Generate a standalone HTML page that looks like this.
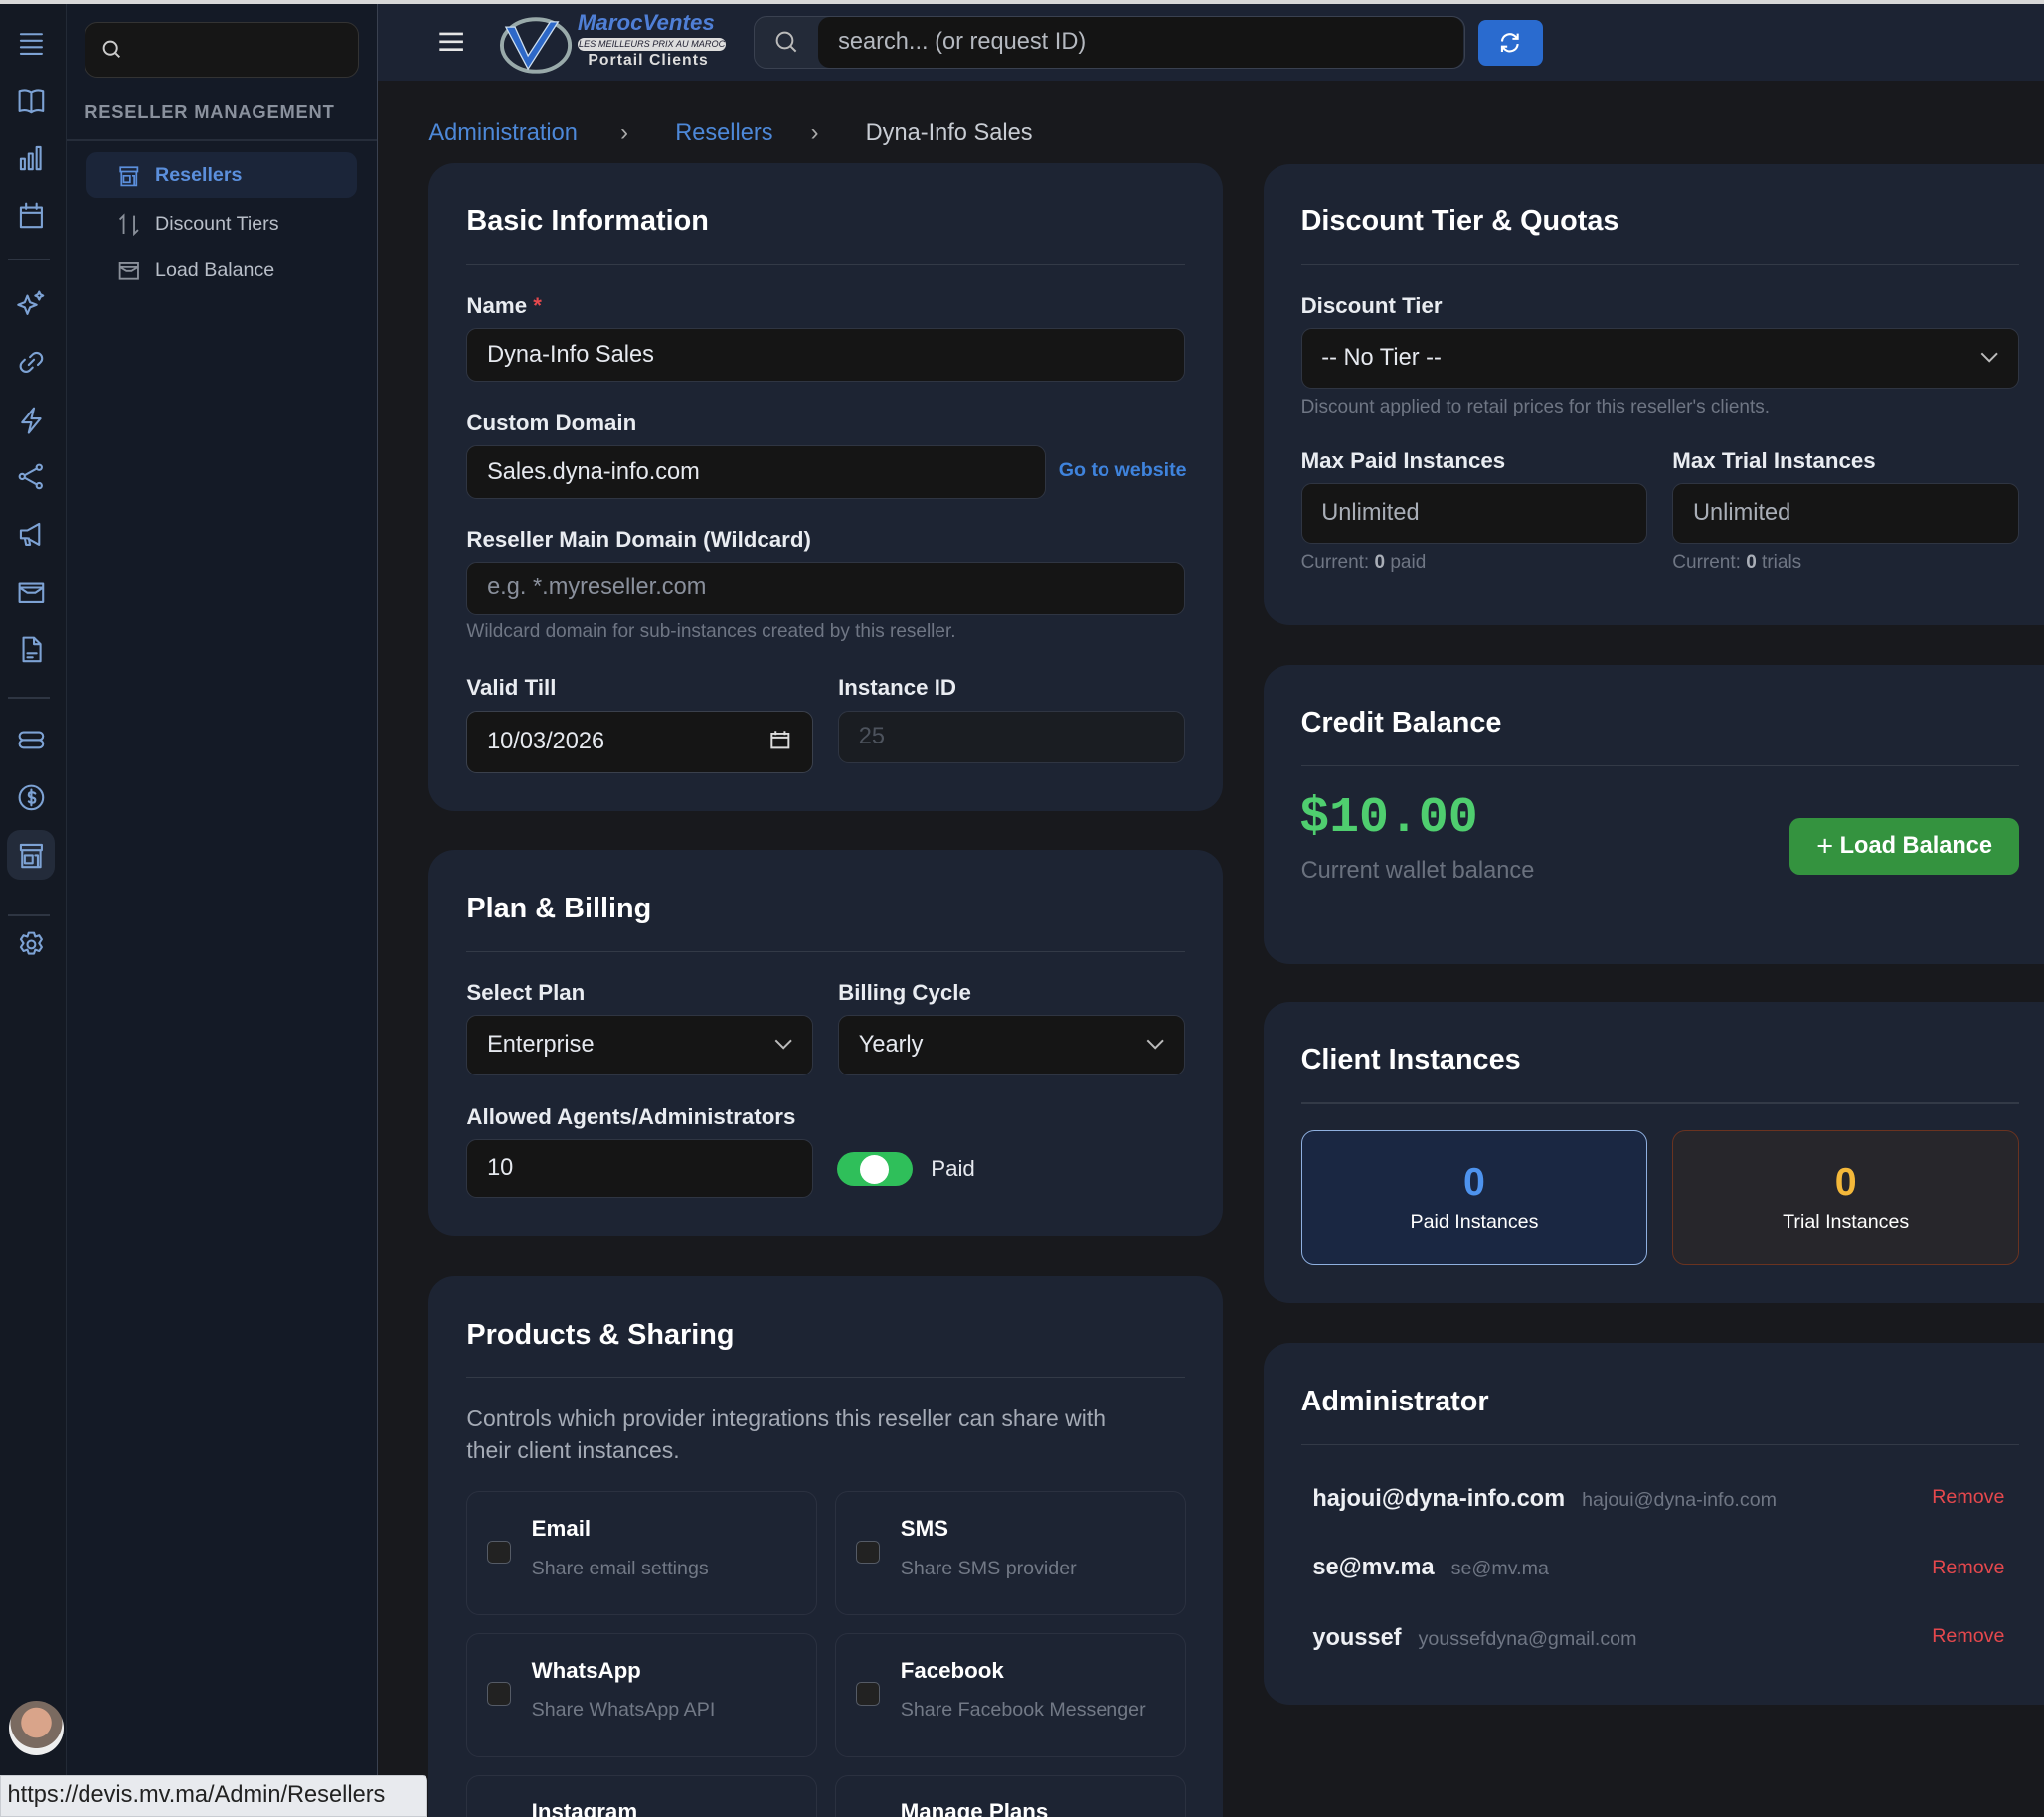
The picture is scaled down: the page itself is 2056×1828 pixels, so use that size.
<!DOCTYPE html>
<html><head><meta charset="utf-8"><style>
html,body{margin:0;padding:0;width:2056px;height:1828px;overflow:hidden;background:#18191d}
#w{zoom:1.31122;position:relative;width:1568px;height:1394px;overflow:hidden;font-family:"Liberation Sans",sans-serif;color:#e6e9ef;background:#18191d}
.a{position:absolute}
.rail{left:0;top:3px;width:50px;height:1391px;background:#141923;border-right:1px solid #232a36}
.side{left:51px;top:3px;width:238px;height:1391px;background:#141a26;border-right:1px solid #3a4150}
.hdr{left:290px;top:3px;width:1278px;height:59px;background:#1c2333}
.card{background:#1d2433;border-radius:20px}
.h{font-size:22px;font-weight:bold;color:#fff}
.hr{height:1px;background:#333a47}
.lbl{font-size:17px;font-weight:bold;color:#e9ecf1}
.inp{background:#151515;border:1px solid #2f3542;border-radius:8px;box-sizing:border-box;font-size:18px;color:#e6e9ef;padding-left:15px;display:flex;align-items:center}
.ph{color:#8a909c}
.help{font-size:14.5px;color:#6f7684}
.ic{stroke:#7da2d4;fill:none;stroke-width:1.6;stroke-linecap:round;stroke-linejoin:round}
.chk{width:18px;height:18px;border:1px solid #555b66;border-radius:4px;background:#222;box-sizing:border-box}
.pc{border:1px solid #2b3140;border-radius:10px;box-sizing:border-box}
.pt{font-size:17px;font-weight:bold;color:#fff}
.ps{font-size:15px;color:#727986}
</style></head><body><div id="w">
<div class="a" style="left:0;top:0;width:1568px;height:3px;background:#d8d8d8"></div>
<div class="a rail">
<svg class="a" style="left:13px;top:19px" width="22" height="22" viewBox="0 0 22 22"><path class="ic" d="M3 4h16M3 9h16M3 14h16M3 19h16"/></svg>
<svg class="a" style="left:13px;top:63px" width="22" height="22" viewBox="0 0 22 22"><path class="ic" d="M11 5v15M11 5C8 3 5 3 2 4v15c3-1 6-1 9 1 3-2 6-2 9-1V4c-3-1-6-1-9 1"/></svg>
<svg class="a" style="left:13px;top:107px" width="22" height="22" viewBox="0 0 22 22"><path class="ic" d="M3 12h3v8H3zM9 8h3v12H9zM15 3h3v17h-3z"/></svg>
<svg class="a" style="left:13px;top:151px" width="22" height="22" viewBox="0 0 22 22"><path class="ic" d="M3 5h16v15H3zM3 9h16M7 2v4M15 2v4"/></svg>
<div class="a" style="left:6px;top:196px;width:32px;height:1px;background:#2e3542"></div>
<svg class="a" style="left:13px;top:219px" width="22" height="22" viewBox="0 0 22 22"><path class="ic" d="M8 5l2 5 5 2-5 2-2 5-2-5-5-2 5-2zM17 2l1 2 2 1-2 1-1 2-1-2-2-1 2-1z"/></svg>
<svg class="a" style="left:13px;top:264px" width="22" height="22" viewBox="0 0 22 22"><path class="ic" d="M9 13l4-4M10 7l2-2a4 4 0 016 6l-2 2M12 15l-2 2a4 4 0 01-6-6l2-2"/></svg>
<svg class="a" style="left:13px;top:308px" width="22" height="22" viewBox="0 0 22 22"><path class="ic" d="M13 2L4 13h7l-2 8 9-11h-7z"/></svg>
<svg class="a" style="left:13px;top:352px" width="22" height="22" viewBox="0 0 22 22"><circle class="ic" cx="4" cy="11" r="2"/><circle class="ic" cx="17" cy="4" r="2"/><circle class="ic" cx="17" cy="18" r="2"/><path class="ic" d="M6 10l9-5M6 12l9 5"/></svg>
<svg class="a" style="left:13px;top:396px" width="22" height="22" viewBox="0 0 22 22"><path class="ic" d="M3 8h5l9-5v16l-9-5H3zM6 14l1 5h3l-1-5"/></svg>
<svg class="a" style="left:13px;top:440px" width="22" height="22" viewBox="0 0 22 22"><path class="ic" d="M2 5h18v14H2zM2 8h18M2 8l6 4h6l6-4"/></svg>
<svg class="a" style="left:13px;top:484px" width="22" height="22" viewBox="0 0 22 22"><path class="ic" d="M5 2h8l5 5v13H5zM13 2v5h5M8 14h7M8 17h4"/></svg>
<div class="a" style="left:6px;top:532px;width:32px;height:1px;background:#2e3542"></div>
<svg class="a" style="left:13px;top:554px" width="22" height="22" viewBox="0 0 22 22"><rect class="ic" x="2" y="5" width="18" height="6" rx="3"/><rect class="ic" x="2" y="11" width="18" height="6" rx="3"/></svg>
<svg class="a" style="left:13px;top:598px" width="22" height="22" viewBox="0 0 22 22"><circle class="ic" cx="11" cy="11" r="9"/><path class="ic" d="M14 8c-1-1-5-2-5 1s5 1 5 4-4 2-5 1M11 5v12"/></svg>
<div class="a" style="left:5px;top:634px;width:37px;height:38px;background:#232b3a;border-radius:10px"></div>
<svg class="a" style="left:13px;top:642px" width="22" height="22" viewBox="0 0 22 22"><path class="ic" d="M3 3h16v4H3zM4 7v13h14V7M6 11h6v6H6zM14 11h2v9"/></svg>
<div class="a" style="left:6px;top:699px;width:32px;height:1px;background:#2e3542"></div>
<svg class="a" style="left:13px;top:711px" width="22" height="22" viewBox="0 0 22 22"><circle class="ic" cx="11" cy="11" r="3"/><path class="ic" d="M9 2h4l1 3 3-1 2 3-2 3 2 3-2 3-3-1-1 3H9l-1-3-3 1-2-3 2-3-2-3 2-3 3 1z"/></svg>
<div class="a" style="left:7px;top:1302px;width:42px;height:42px;border-radius:50%;background:radial-gradient(circle at 50% 40%,#d9a48a 0 35%,#7a6a60 36% 60%,#eee 61%)"></div>
</div>
<div class="a side">
<div class="a" style="left:14px;top:14px;width:209px;height:41px;background:#161616;border:1px solid #333;border-radius:10px"></div>
<svg class="a" style="left:27px;top:27px" width="16" height="16" viewBox="0 0 16 16"><circle cx="7" cy="7" r="5" stroke="#ccc" fill="none" stroke-width="1.5"/><path d="M11 11l3 3" stroke="#ccc" stroke-width="1.5"/></svg>
<div class="a" style="left:14px;top:75px;font-size:14px;font-weight:bold;color:#8a919d;letter-spacing:.6px">RESELLER MANAGEMENT</div>
<div class="a" style="left:0;top:104px;width:238px;height:1px;background:#262d3a"></div>
<div class="a" style="left:15px;top:114px;width:208px;height:35px;background:#1b2539;border-radius:8px"></div>
<svg class="a" style="left:39px;top:123px" width="18" height="18" viewBox="0 0 22 22"><path d="M3 3h16v4H3zM4 7v13h14V7M6 11h6v6H6zM14 11h2v9" stroke="#5b8fdc" fill="none" stroke-width="1.6"/></svg>
<div class="a" style="left:68px;top:123px;font-size:15px;font-weight:bold;color:#5b8fdc">Resellers</div>
<svg class="a" style="left:39px;top:160px" width="18" height="18" viewBox="0 0 18 18"><path d="M5 16V2L2 5M13 2v14l3-3" stroke="#8a909a" fill="none" stroke-width="1.4"/></svg>
<div class="a" style="left:68px;top:160px;font-size:15px;color:#b8bec8">Discount Tiers</div>
<svg class="a" style="left:39px;top:196px" width="18" height="18" viewBox="0 0 18 18"><path d="M2 3h14v12H2zM2 6h14M2 6l5 3h4l5-3" stroke="#8a909a" fill="none" stroke-width="1.4"/></svg>
<div class="a" style="left:68px;top:196px;font-size:15px;color:#b8bec8">Load Balance</div>
</div>
<div class="a hdr">
<svg class="a" style="left:46px;top:20px" width="20" height="18" viewBox="0 0 20 18"><path d="M1 3h18M1 9h18M1 15h18" stroke="#e6e6e6" stroke-width="2"/></svg>
<svg class="a" style="left:92px;top:8px" width="58" height="46" viewBox="0 0 58 46"><ellipse cx="29" cy="24" rx="26" ry="20" fill="none" stroke="#9aa" stroke-width="3"/><path d="M6 10l17 32L46 6l-6 0-17 26L13 10z" fill="#2d68c8" stroke="#cde" stroke-width="1"/></svg>
<div class="a" style="left:153px;top:5px;font-size:17px;font-weight:bold;font-style:italic;color:#4f7fd6">MarocVentes</div>
<div class="a" style="left:153px;top:26px;width:114px;height:10px;background:#ddd;border-radius:5px;font-size:7px;color:#223;text-align:center;line-height:10px;font-style:italic">LES MEILLEURS PRIX AU MAROC</div>
<div class="a" style="left:161px;top:37px;font-size:12px;font-weight:bold;color:#ddd;letter-spacing:.8px">Portail Clients</div>
<div class="a" style="left:288px;top:9px;width:546px;height:41px;border:1px solid #3a4150;border-radius:10px;background:#232a38;box-sizing:border-box"></div>
<svg class="a" style="left:304px;top:20px" width="18" height="18" viewBox="0 0 18 18"><circle cx="8" cy="8" r="6" stroke="#bbb" fill="none" stroke-width="1.5"/><path d="M12.5 12.5l4 4" stroke="#bbb" stroke-width="1.5"/></svg>
<div class="a" style="left:338px;top:10px;width:495px;height:39px;background:#141414;border-radius:9px;font-size:18px;color:#b5b9c0;line-height:39px;padding-left:15px;box-sizing:border-box">search... (or request ID)</div>
<div class="a" style="left:844px;top:12px;width:50px;height:35px;background:#2a6bcf;border-radius:6px"></div>
<svg class="a" style="left:859px;top:21px" width="18" height="18" viewBox="0 0 18 18"><path d="M3 8a6 6 0 0110-4l2 2M15 10a6 6 0 01-10 4l-2-2M15 2v4h-4M3 16v-4h4" stroke="#fff" fill="none" stroke-width="1.6"/></svg>
</div>
<div class="a" style="left:329px;top:92px;font-size:18px;color:#4d88d8">Administration</div>
<div class="a" style="left:476px;top:92px;font-size:18px;color:#aaa">›</div>
<div class="a" style="left:518px;top:92px;font-size:18px;color:#4d88d8">Resellers</div>
<div class="a" style="left:622px;top:92px;font-size:18px;color:#aaa">›</div>
<div class="a" style="left:664px;top:92px;font-size:18px;color:#c8ccd3">Dyna-Info Sales</div>

<div class="a card" style="left:329px;top:125px;width:609px;height:497px">
<div class="a h" style="left:29px;top:32px">Basic Information</div>
<div class="a hr" style="left:29px;top:78px;width:551px"></div>
<div class="a lbl" style="left:29px;top:100px">Name <span style="color:#e5484d">*</span></div>
<div class="a inp" style="left:29px;top:127px;width:551px;height:41px">Dyna-Info Sales</div>
<div class="a lbl" style="left:29px;top:190px">Custom Domain</div>
<div class="a inp" style="left:29px;top:217px;width:444px;height:41px">Sales.dyna-info.com</div>
<div class="a" style="left:483px;top:227px;font-size:15px;font-weight:bold;color:#3f83dc">Go to website</div>
<div class="a lbl" style="left:29px;top:279px">Reseller Main Domain (Wildcard)</div>
<div class="a inp ph" style="left:29px;top:306px;width:551px;height:41px">e.g. *.myreseller.com</div>
<div class="a help" style="left:29px;top:352px">Wildcard domain for sub-instances created by this reseller.</div>
<div class="a lbl" style="left:29px;top:393px">Valid Till</div>
<div class="a inp" style="left:29px;top:420px;width:266px;height:48px;border-color:#3a404c">10/03/2026</div>
<svg class="a" style="left:262px;top:435px" width="15" height="15" viewBox="0 0 15 15"><path d="M1 3h13v11H1zM1 6h13M4 1v3M11 1v3" stroke="#ddd" fill="none" stroke-width="1.5"/></svg>
<div class="a lbl" style="left:314px;top:393px">Instance ID</div>
<div class="a inp" style="left:314px;top:420px;width:266px;height:41px;background:#1a1d22;color:#4d535d">25</div>
</div>

<div class="a card" style="left:329px;top:652px;width:609px;height:296px">
<div class="a h" style="left:29px;top:33px">Plan &amp; Billing</div>
<div class="a hr" style="left:29px;top:78px;width:551px"></div>
<div class="a lbl" style="left:29px;top:100px">Select Plan</div>
<div class="a inp" style="left:29px;top:127px;width:266px;height:46px">Enterprise</div>
<svg class="a" style="left:265px;top:145px" width="14" height="9" viewBox="0 0 14 9"><path d="M1 1l6 6 6-6" stroke="#bbb" fill="none" stroke-width="1.5"/></svg>
<div class="a lbl" style="left:314px;top:100px">Billing Cycle</div>
<div class="a inp" style="left:314px;top:127px;width:266px;height:46px">Yearly</div>
<svg class="a" style="left:550px;top:145px" width="14" height="9" viewBox="0 0 14 9"><path d="M1 1l6 6 6-6" stroke="#bbb" fill="none" stroke-width="1.5"/></svg>
<div class="a lbl" style="left:29px;top:195px">Allowed Agents/Administrators</div>
<div class="a inp" style="left:29px;top:222px;width:266px;height:45px">10</div>
<div class="a" style="left:313px;top:232px;width:58px;height:26px;background:#2fbf5a;border-radius:13px"></div>
<div class="a" style="left:331px;top:234px;width:22px;height:22px;background:#fff;border-radius:50%"></div>
<div class="a" style="left:385px;top:235px;font-size:17px;color:#e6e9ef">Paid</div>
</div>

<div class="a card" style="left:329px;top:979px;width:609px;height:440px">
<div class="a h" style="left:29px;top:33px">Products &amp; Sharing</div>
<div class="a hr" style="left:29px;top:77px;width:551px"></div>
<div class="a" style="left:29px;top:98px;font-size:17.5px;color:#a5abb6;line-height:24px;width:500px">Controls which provider integrations this reseller can share with their client instances.</div>
<div class="a pc" style="left:29px;top:165px;width:269px;height:95px"><div class="a chk" style="left:15px;top:37px"></div><div class="a pt" style="left:49px;top:18px">Email</div><div class="a ps" style="left:49px;top:50px">Share email settings</div></div>
<div class="a pc" style="left:312px;top:165px;width:269px;height:95px"><div class="a chk" style="left:15px;top:37px"></div><div class="a pt" style="left:49px;top:18px">SMS</div><div class="a ps" style="left:49px;top:50px">Share SMS provider</div></div>
<div class="a pc" style="left:29px;top:274px;width:269px;height:95px"><div class="a chk" style="left:15px;top:37px"></div><div class="a pt" style="left:49px;top:18px">WhatsApp</div><div class="a ps" style="left:49px;top:50px">Share WhatsApp API</div></div>
<div class="a pc" style="left:312px;top:274px;width:269px;height:95px"><div class="a chk" style="left:15px;top:37px"></div><div class="a pt" style="left:49px;top:18px">Facebook</div><div class="a ps" style="left:49px;top:50px">Share Facebook Messenger</div></div>
<div class="a pc" style="left:29px;top:383px;width:269px;height:95px"><div class="a pt" style="left:49px;top:18px">Instagram</div></div>
<div class="a pc" style="left:312px;top:383px;width:269px;height:95px"><div class="a pt" style="left:49px;top:18px">Manage Plans</div></div>
</div>

<div class="a card" style="left:969px;top:126px;width:620px;height:354px">
<div class="a h" style="left:29px;top:31px">Discount Tier &amp; Quotas</div>
<div class="a hr" style="left:29px;top:77px;width:551px"></div>
<div class="a lbl" style="left:29px;top:99px">Discount Tier</div>
<div class="a inp" style="left:29px;top:126px;width:551px;height:46px">-- No Tier --</div>
<svg class="a" style="left:550px;top:144px" width="14" height="9" viewBox="0 0 14 9"><path d="M1 1l6 6 6-6" stroke="#bbb" fill="none" stroke-width="1.5"/></svg>
<div class="a help" style="left:29px;top:178px">Discount applied to retail prices for this reseller's clients.</div>
<div class="a lbl" style="left:29px;top:218px">Max Paid Instances</div>
<div class="a inp ph" style="left:29px;top:245px;width:266px;height:46px;color:#a9aeb7">Unlimited</div>
<div class="a help" style="left:29px;top:297px">Current: <b style="color:#a9aeb7">0</b> paid</div>
<div class="a lbl" style="left:314px;top:218px">Max Trial Instances</div>
<div class="a inp ph" style="left:314px;top:245px;width:266px;height:46px;color:#a9aeb7">Unlimited</div>
<div class="a help" style="left:314px;top:297px">Current: <b style="color:#a9aeb7">0</b> trials</div>
</div>

<div class="a card" style="left:969px;top:510px;width:620px;height:230px">
<div class="a h" style="left:29px;top:32px">Credit Balance</div>
<div class="a hr" style="left:29px;top:77px;width:551px"></div>
<div class="a" style="left:28px;top:96px;font-family:'Liberation Mono',monospace;font-size:38px;font-weight:bold;color:#4fce6f">$10.00</div>
<div class="a" style="left:29px;top:148px;font-size:18px;color:#6a717e">Current wallet balance</div>
<div class="a" style="left:404px;top:118px;width:176px;height:43px;background:#34933f;border-radius:8px;color:#fff;font-size:18px;font-weight:bold;line-height:43px;text-align:center"><span style="font-weight:normal;font-size:22px;vertical-align:-2px">+</span>&nbsp;Load Balance</div>
</div>

<div class="a card" style="left:969px;top:769px;width:620px;height:231px">
<div class="a h" style="left:29px;top:32px">Client Instances</div>
<div class="a hr" style="left:29px;top:77px;width:551px"></div>
<div class="a" style="left:29px;top:98px;width:266px;height:104px;box-sizing:border-box;border:1px solid #8fb0e0;border-radius:10px;background:#1a2742;text-align:center">
<div style="font-size:30px;font-weight:bold;color:#4e93ee;margin-top:22px">0</div><div style="font-size:15px;color:#fff;margin-top:5px">Paid Instances</div></div>
<div class="a" style="left:314px;top:98px;width:266px;height:104px;box-sizing:border-box;border:1px solid #6a3320;border-radius:10px;background:#27262b;text-align:center">
<div style="font-size:30px;font-weight:bold;color:#f4b83a;margin-top:22px">0</div><div style="font-size:15px;color:#fff;margin-top:5px">Trial Instances</div></div>
</div>

<div class="a card" style="left:969px;top:1030px;width:620px;height:278px">
<div class="a h" style="left:29px;top:33px">Administrator</div>
<div class="a hr" style="left:29px;top:78px;width:551px"></div>
<div class="a" style="left:38px;top:110px;font-size:18px;font-weight:bold;color:#eef0f4">hajoui@dyna-info.com <span style="font-weight:normal;font-size:15px;color:#6f7684;margin-left:8px">hajoui@dyna-info.com</span></div>
<div class="a" style="left:513px;top:110px;font-size:15px;color:#e5484d">Remove</div>
<div class="a" style="left:38px;top:163px;font-size:18px;font-weight:bold;color:#eef0f4">se@mv.ma <span style="font-weight:normal;font-size:15px;color:#6f7684;margin-left:8px">se@mv.ma</span></div>
<div class="a" style="left:513px;top:164px;font-size:15px;color:#e5484d">Remove</div>
<div class="a" style="left:38px;top:217px;font-size:18px;font-weight:bold;color:#eef0f4">youssef <span style="font-weight:normal;font-size:15px;color:#6f7684;margin-left:8px">youssefdyna@gmail.com</span></div>
<div class="a" style="left:513px;top:217px;font-size:15px;color:#e5484d">Remove</div>
</div>

<div class="a" style="left:0;top:1362px;width:328px;height:32px;background:#e8eaee;border:1px solid #c9ccd2;box-sizing:border-box;border-radius:0 4px 0 0;font-size:18px;color:#222;line-height:30px;padding-left:5px">https://devis.mv.ma/Admin/Resellers</div>
</div></body></html>
